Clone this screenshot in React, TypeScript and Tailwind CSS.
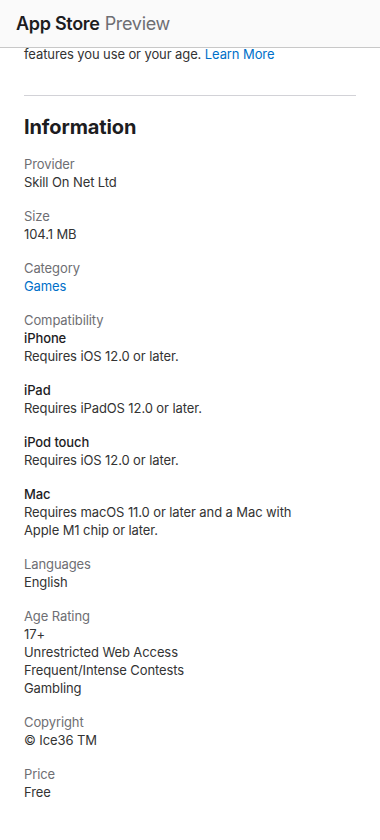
const items: { label: string; lines: { text: string; link?: boolean }[] }[] = [
  { label: 'Provider', lines: [{ text: 'Skill On Net Ltd' }] },
  { label: 'Size', lines: [{ text: '104.1 MB' }] },
  { label: 'Category', lines: [{ text: 'Games', link: true }] },
];

const devices = [
  { name: 'iPhone', req: ['Requires iOS 12.0 or later.'] },
  { name: 'iPad', req: ['Requires iPadOS 12.0 or later.'] },
  { name: 'iPod touch', req: ['Requires iOS 12.0 or later.'] },
  { name: 'Mac', req: ['Requires macOS 11.0 or later and a Mac with', 'Apple M1 chip or later.'] },
];

const rest: { label: string; lines: string[] }[] = [
  { label: 'Languages', lines: ['English'] },
  { label: 'Age Rating', lines: ['17+', 'Unrestricted Web Access', 'Frequent/Intense Contests', 'Gambling'] },
  { label: 'Copyright', lines: ['© Ice36 TM'] },
  { label: 'Price', lines: ['Free'] },
];

export default function App() {
  return (
    <div className="w-[380px] h-[840px] overflow-hidden bg-white font-['Inter',sans-serif] text-[13px] leading-[18px] tracking-[-0.1px] text-[#333]">
      <header className="h-[48px] bg-[#fafafa] border-b border-[#c8c8c8] flex items-center px-4">
        <span className="text-[18px] font-semibold tracking-[-0.3px] text-[#1d1d1f]">App Store</span>
        <span className="ml-[5px] text-[18px] tracking-[-0.3px] text-[#6e6e73]">Preview</span>
      </header>

      <main className="px-6">
        <p className="-mt-[3px] text-[#333]">
          features you use or your age. <span className="text-[#0070c9]">Learn More</span>
        </p>

        <div className="mt-[32px] border-t border-[#d2d2d7]" />

        <h2 className="mt-[18px] text-[20px] leading-[26px] font-bold text-[#1d1d1f]">Information</h2>

        <dl className="mt-[15px] flex flex-col gap-4">
          {items.map((it) => (
            <div key={it.label}>
              <dt className="text-[#6e6e73]">{it.label}</dt>
              {it.lines.map((l) => (
                <dd key={l.text} className={l.link ? 'text-[#0070c9]' : ''}>{l.text}</dd>
              ))}
            </div>
          ))}

          <div>
            <dt className="text-[#6e6e73]">Compatibility</dt>
            <dd className="flex flex-col gap-4">
              {devices.map((d) => (
                <div key={d.name}>
                  <div className="font-medium text-[#1d1d1f]">{d.name}</div>
                  {d.req.map((r) => (
                    <div key={r}>{r}</div>
                  ))}
                </div>
              ))}
            </dd>
          </div>

          {rest.map((it) => (
            <div key={it.label}>
              <dt className="text-[#6e6e73]">{it.label}</dt>
              {it.lines.map((l) => (
                <dd key={l}>{l}</dd>
              ))}
            </div>
          ))}
        </dl>
      </main>
    </div>
  );
}
